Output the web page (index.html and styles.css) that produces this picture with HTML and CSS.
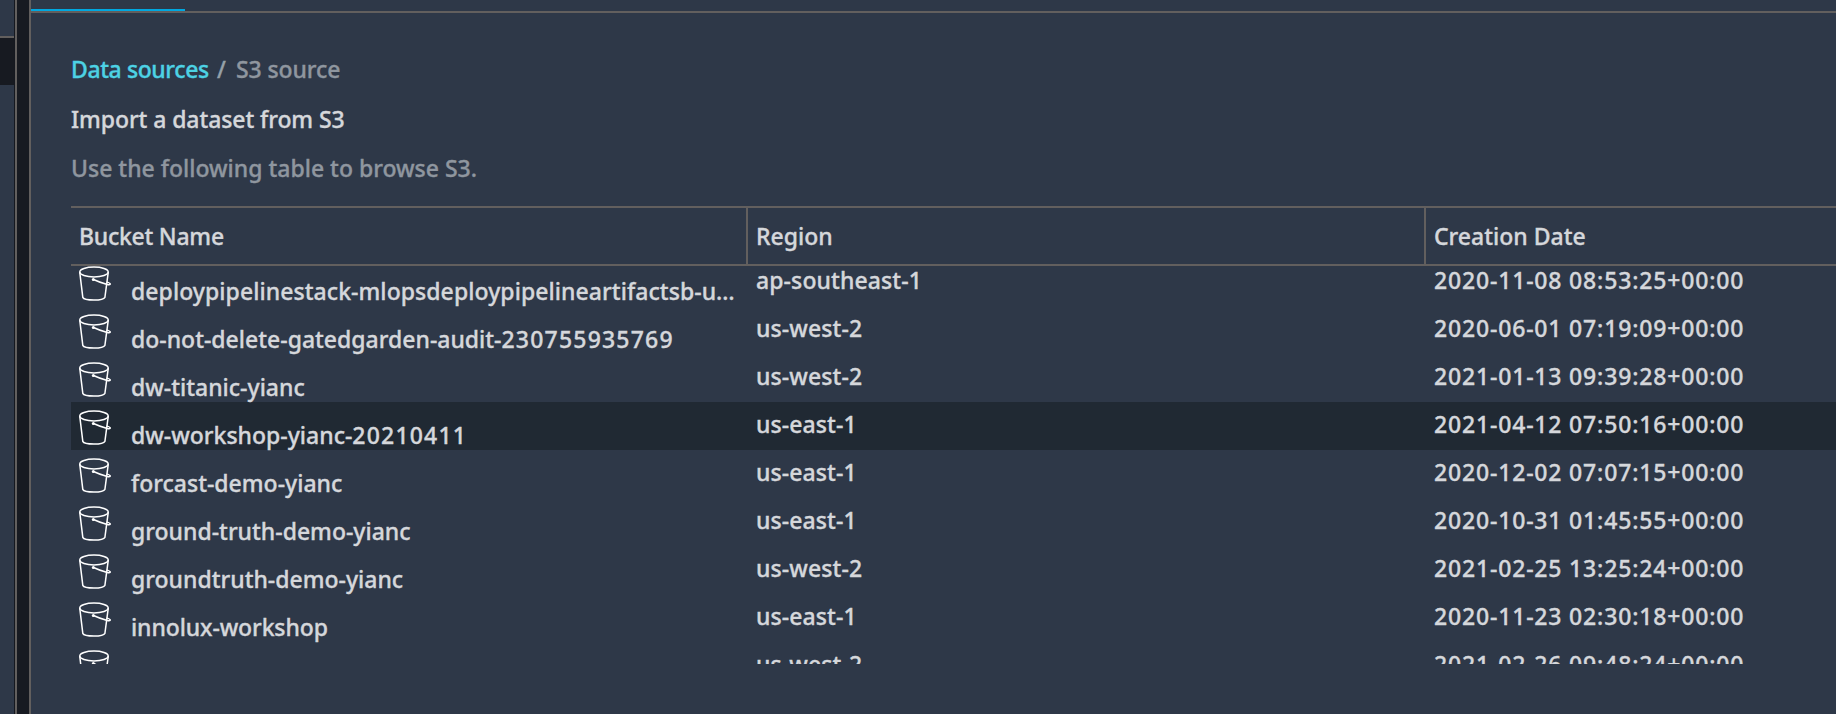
FILE: index.html
```
<!DOCTYPE html>
<html lang="en">
<head>
<meta charset="utf-8">
<title>Import a dataset from S3</title>
<link rel="stylesheet" href="styles.css">
</head>
<body>
<svg class="defs" width="0" height="0" aria-hidden="true">
  <symbol id="bucket" viewBox="0 0 34 36">
    <g fill="none" stroke="#fff" stroke-width="1.5" stroke-linecap="round" stroke-linejoin="round">
      <ellipse cx="16" cy="6" rx="14.2" ry="4.9"/>
      <path d="M1.8 6.6 4.8 31.4C5.4 32.8 10 34.1 16 34.1S26.200 32.800 26.900 31.400L30.200 6.600"/>
      <path d="M15.500 13.500C20 15.700 25 17.300 29.300 18.400C31.500 19 32.600 18.500 32.100 17.600C31.700 16.900 30.500 16.500 29.200 16.100"/>
    </g>
    <circle cx="15.300" cy="13.500" r="1.5" fill="#fff"/>
  </symbol>
</svg>
<div class="app">
  <aside class="sidebar"><div class="sidebar-top"></div><div class="sidebar-active"></div></aside>
  <div class="divider"></div>
  <main class="main">
    <div class="tabs"><div class="tab-active"></div></div>
    <section class="content">
      <nav class="crumbs"><a class="link">Data sources</a><span class="slash">/</span><span class="current">S3 source</span></nav>
      <h1 class="title">Import a dataset from S3</h1>
      <p class="hint">Use the following table to browse S3.</p>
      <div class="table">
        <div class="row head"><div class="th">Bucket Name</div><div class="th">Region</div><div class="th">Creation Date</div></div>
        <div class="body">
          <div class="row"><div class="name"><svg class="icon"><use href="#bucket"/></svg><span class="long">deploypipelinestack-mlopsdeploypipelineartifactsb-u…</span></div><div class="cell">ap-southeast-1</div><div class="cell date">2020-11-08 08:53:25+00:00</div></div>
          <div class="row"><div class="name"><svg class="icon"><use href="#bucket"/></svg><span>do-not-delete-gatedgarden-audit-<span class="num">230755935769</span></span></div><div class="cell">us-west-2</div><div class="cell date">2020-06-01 07:19:09+00:00</div></div>
          <div class="row"><div class="name"><svg class="icon"><use href="#bucket"/></svg><span>dw-titanic-yianc</span></div><div class="cell">us-west-2</div><div class="cell date">2021-01-13 09:39:28+00:00</div></div>
          <div class="row selected"><div class="name"><svg class="icon"><use href="#bucket"/></svg><span>dw-workshop-yianc-<span class="num">20210411</span></span></div><div class="cell">us-east-1</div><div class="cell date">2021-04-12 07:50:16+00:00</div></div>
          <div class="row"><div class="name"><svg class="icon"><use href="#bucket"/></svg><span>forcast-demo-yianc</span></div><div class="cell">us-east-1</div><div class="cell date">2020-12-02 07:07:15+00:00</div></div>
          <div class="row"><div class="name"><svg class="icon"><use href="#bucket"/></svg><span>ground-truth-demo-yianc</span></div><div class="cell">us-east-1</div><div class="cell date">2020-10-31 01:45:55+00:00</div></div>
          <div class="row"><div class="name"><svg class="icon"><use href="#bucket"/></svg><span>groundtruth-demo-yianc</span></div><div class="cell">us-west-2</div><div class="cell date">2021-02-25 13:25:24+00:00</div></div>
          <div class="row"><div class="name"><svg class="icon"><use href="#bucket"/></svg><span class="tight">innolux-workshop</span></div><div class="cell">us-east-1</div><div class="cell date">2020-11-23 02:30:18+00:00</div></div>
          <div class="row"><div class="name"><svg class="icon"><use href="#bucket"/></svg></div><div class="cell">us-west-2</div><div class="cell date">2021-02-26 09:48:24+00:00</div></div>
        </div>
      </div>
    </section>
  </main>
</div>
</body>
</html>
```
FILE: styles.css
```
* { box-sizing: border-box; }
body {
  margin: 0;
  height: 714px;
  overflow: hidden;
  background: #2e3848;
  color: #d5d7db;
  font: 500 23px/34px "Noto Sans", sans-serif;
  -webkit-text-stroke: 0.35px currentColor;
}
.defs { display: block; }
.app { display: flex; height: 714px; }
.sidebar { width: 15px; border-right: 1px solid #15181f; }
.sidebar-top { height: 38px; border-bottom: 2px solid #625f5e; }
.sidebar-active { height: 47px; background: #171a21; }
.divider {
  width: 16px;
  background: #171a21;
  border: solid #625f5e;
  border-width: 0 2px;
}
.main { flex: 1; min-width: 0; }
.tabs { height: 13px; padding-top: 9px; border-bottom: 2px solid #625f5e; }
.tab-active { width: 154px; height: 2px; background: #00a8e1; }
.content { padding: 39px 0 0 40px; }
.crumbs { display: flex; height: 50px; }
.link { color: #4dd2e4; width: 146px; letter-spacing: -0.4px; }
.slash { width: 19px; color: #95a0a8; }
.current { color: #8f969f; letter-spacing: -0.1px; }
.title { margin: 0; height: 49px; font-size: 23px; font-weight: 500; letter-spacing: -0.08px; }
.hint { margin: 0; height: 55px; color: #8f969f; }
.row { display: grid; grid-template-columns: 677px 678px 1fr; height: 48px; white-space: nowrap; }
.head { height: 60px; border: solid #625f5e; border-width: 2px 0; }
.th { padding-left: 8px; line-height: 56px; border-right: 2px solid #625f5e; }
.th:last-child { border-right: 0; }
.th:first-child { letter-spacing: -0.25px; }
.body { height: 398px; overflow: hidden; }
.body .row:first-child { margin-top: -8px; }
.selected { background: #202933; }
.name { display: flex; padding: 18px 0 0 7px; line-height: 30px; }
.icon { width: 34px; height: 36px; margin: -10px 19px 0 0; }
.long { letter-spacing: 0.06px; }
.tight { letter-spacing: -0.12px; }
.num { letter-spacing: 1.2px; }
.cell { padding-left: 8px; line-height: 44px; letter-spacing: 0.1px; }
.cell.date { letter-spacing: 0.83px; }
```
